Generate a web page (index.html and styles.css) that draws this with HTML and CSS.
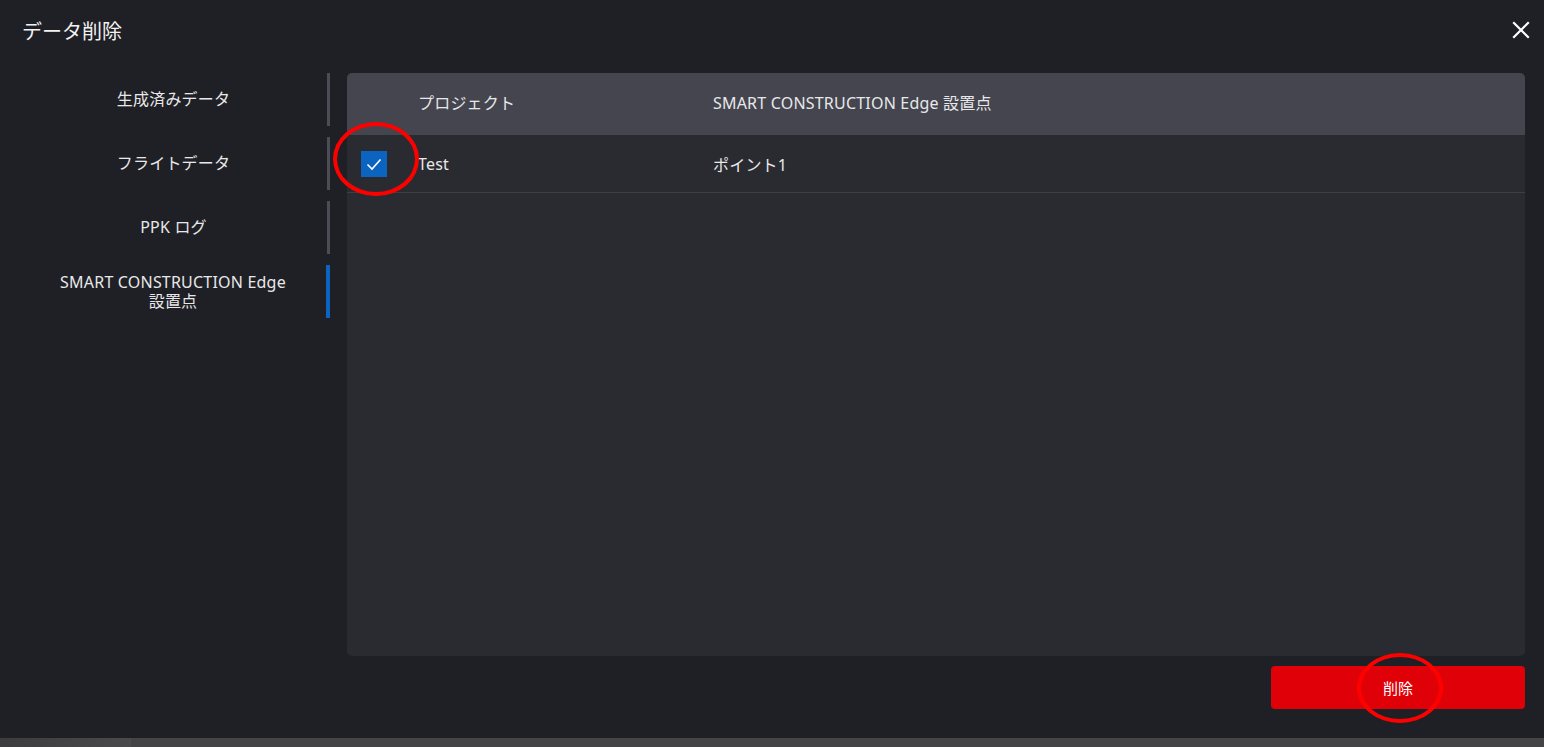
FILE: index.html
```html
<!DOCTYPE html>
<html lang="ja">
<head>
    <meta charset="UTF-8">
    <meta name="viewport" content="width=device-width, initial-scale=1.0">
    <title>データ削除</title>
    <link rel="stylesheet" href="styles.css">
</head>
<body>
    <div class="dialog">
        <div class="dialog-header">
            <h1>データ削除</h1>
            <button class="close-button" aria-label="閉じる">
                <svg width="18" height="18" viewBox="0 0 18 18">
                    <path d="M2 2 L16 16 M16 2 L2 16" stroke="#ffffff" stroke-width="2.2" stroke-linecap="square"/>
                </svg>
            </button>
        </div>

        <div class="dialog-body">
            <ul class="side-tabs">
                <li class="side-tab">生成済みデータ</li>
                <li class="side-tab">フライトデータ</li>
                <li class="side-tab">PPK ログ</li>
                <li class="side-tab active">SMART CONSTRUCTION Edge<br>設置点</li>
            </ul>

            <div class="main-column">
                <div class="data-panel">
                    <div class="table-row table-head">
                        <div class="cell-check"></div>
                        <div class="cell">プロジェクト</div>
                        <div class="cell">SMART CONSTRUCTION Edge 設置点</div>
                    </div>
                    <div class="table-row">
                        <div class="cell-check">
                            <span class="checkbox checked">
                                <svg width="26" height="26" viewBox="0 0 26 26">
                                    <path d="M6.5 13.5 L11 18 L19.5 8.5" fill="none" stroke="#ffffff" stroke-width="1.6"/>
                                </svg>
                            </span>
                            <span class="mark-ring ring-check"></span>
                        </div>
                        <div class="cell">Test</div>
                        <div class="cell">ポイント1</div>
                    </div>
                </div>

                <div class="dialog-footer">
                    <button class="delete-button">
                        削除
                        <span class="mark-ring ring-delete"></span>
                    </button>
                </div>
            </div>
        </div>
    </div>
    <div class="scroll-track"><div class="scroll-thumb"></div></div>
</body>
</html>
```

FILE: styles.css
```css
* {
    box-sizing: border-box;
}

body {
    margin: 0;
    height: 747px;
    overflow: hidden;
    background-color: #1f2025;
    color: #e8e8ea;
    font-family: "Noto Sans", "Noto Sans CJK JP", sans-serif;
}

.dialog {
    height: 738px;
    display: flex;
    flex-direction: column;
}

.dialog-header {
    height: 60px;
    padding: 0 14px 0 22px;
    display: flex;
    align-items: center;
    justify-content: space-between;
}

.dialog-header h1 {
    margin: 0;
    font-size: 20px;
    font-weight: normal;
    color: #f2f2f2;
}

.close-button {
    background: none;
    border: none;
    padding: 0;
    width: 18px;
    height: 18px;
    cursor: pointer;
}

.dialog-body {
    display: flex;
    flex: 1;
    padding: 13px 19px 0 20px;
}

.side-tabs {
    list-style: none;
    margin: 0;
    padding: 0;
    width: 310px;
    flex-shrink: 0;
}

.side-tab {
    height: 53px;
    margin-bottom: 11px;
    border-right: 3px solid #4b4c55;
    display: flex;
    align-items: center;
    justify-content: center;
    text-align: center;
    font-size: 16px;
    line-height: 19px;
    letter-spacing: 0.2px;
    color: #e8e8ea;
}

.side-tab.active {
    border-right: 4px solid #0a64c0;
}

.main-column {
    flex: 1;
    margin-left: 17px;
    display: flex;
    flex-direction: column;
}

.data-panel {
    height: 583px;
    background-color: #2a2b30;
    border-radius: 5px;
}

.table-row {
    display: grid;
    grid-template-columns: 70px 295px 1fr;
    align-items: center;
    height: 58px;
    border-bottom: 1px solid #3d3e44;
    font-size: 16px;
    letter-spacing: 0.2px;
}

.table-head {
    height: 62px;
    padding-bottom: 4px;
    background-color: #45454f;
    border-bottom: none;
    border-radius: 5px 5px 0 0;
}

.cell {
    padding-left: 1px;
    white-space: nowrap;
}

.cell-check {
    position: relative;
    height: 100%;
    display: flex;
    align-items: center;
    padding-left: 14px;
}

.checkbox {
    width: 26px;
    height: 26px;
    display: block;
}

.checkbox svg {
    display: block;
}

.checkbox.checked {
    background-color: #0a64c0;
}

.dialog-footer {
    display: flex;
    justify-content: flex-end;
    margin-top: 10px;
}

.delete-button {
    position: relative;
    width: 254px;
    height: 43px;
    background-color: #e00008;
    color: #ffffff;
    border: none;
    border-radius: 4px;
    font-family: inherit;
    font-size: 15px;
    cursor: pointer;
}

/* red annotation rings drawn over the screenshot */
.mark-ring {
    position: absolute;
    border: 4px solid #ff0000;
    border-radius: 50%;
    pointer-events: none;
}

.ring-check {
    left: -14px;
    top: -13px;
    width: 86px;
    height: 74px;
}

.ring-delete {
    left: 86px;
    top: -13px;
    width: 86px;
    height: 70px;
}

.scroll-track {
    height: 9px;
    background-color: #444446;
}

.scroll-thumb {
    width: 131px;
    height: 9px;
    background: linear-gradient(to right, #3c3c3e, #4a4a4c);
}
```
